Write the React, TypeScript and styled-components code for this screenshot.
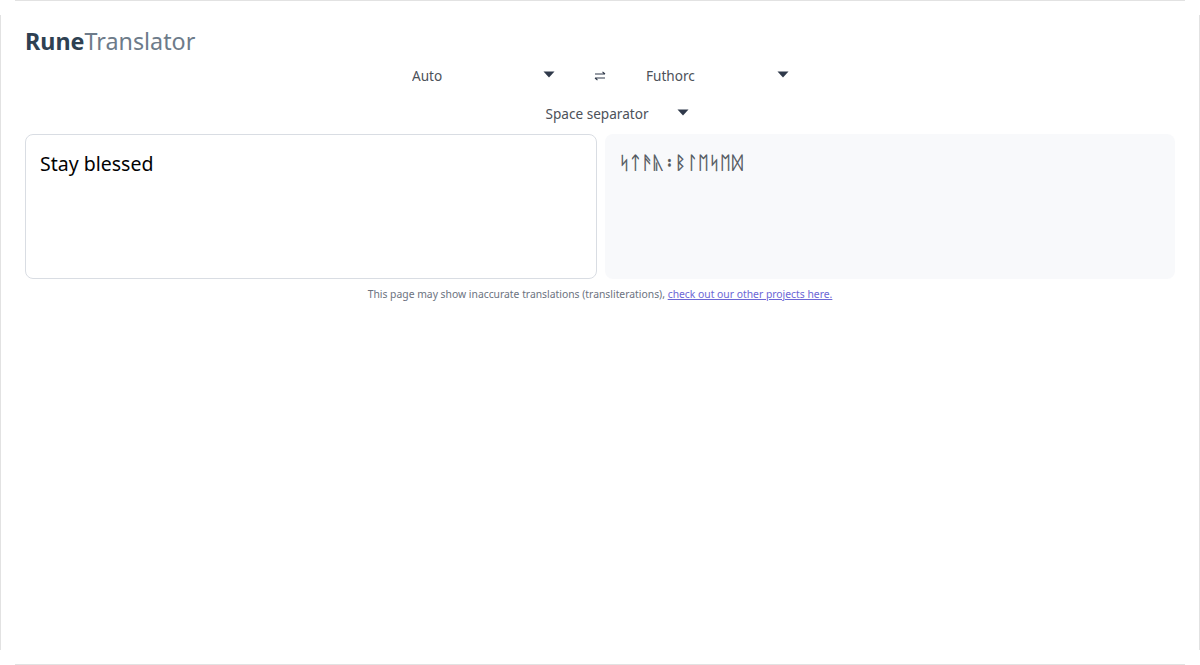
import styled, { createGlobalStyle } from "styled-components";

const GlobalStyle = createGlobalStyle`
  html, body {
    margin: 0;
    padding: 0;
    background: #fff;
    font-family: "Noto Sans", sans-serif;
  }
  * {
    box-sizing: border-box;
  }
`;

function Caret() {
  return (
    <CaretIcon viewBox="0 0 12 7" aria-hidden="true">
      <path d="M0.5 0.5h11L6 6.5z" fill="#2d3748" />
    </CaretIcon>
  );
}

function SwapIcon() {
  return (
    <SwapSvg viewBox="0 0 12 10" aria-hidden="true">
      <path
        d="M1 3h10M8.5 0.8 11 3M11 7H1M3.5 9.2 1 7"
        fill="none"
        stroke="#2d3748"
        strokeWidth="1.1"
      />
    </SwapSvg>
  );
}

export default function App() {
  return (
    <>
      <GlobalStyle />
      <Page>
        <Title>
          <b>Rune</b>
          <span>Translator</span>
        </Title>
        <LanguageRow>
          <Select>
            Auto
            <Caret />
          </Select>
          <SwapButton>
            <SwapIcon />
          </SwapButton>
          <Select>
            Futhorc
            <Caret />
          </Select>
        </LanguageRow>
        <SeparatorRow>
          <Select>
            Space separator
            <Caret />
          </Select>
        </SeparatorRow>
        <Panels>
          <Input defaultValue="Stay blessed" />
          <Output>ᛋᛏᚫᚣ᛬ᛒᛚᛖᛋᛖᛞ</Output>
        </Panels>
        <Note>
          This page may show inaccurate translations (transliterations),{" "}
          <a href="#projects">check out our other projects here.</a>
        </Note>
      </Page>
    </>
  );
}

const edge = "linear-gradient(#e2e2e2, #e2e2e2)";

const Page = styled.div`
  width: 1200px;
  height: 665px;
  padding: 25px 25px 0;
  overflow: hidden;
  background:
    ${edge} 15px 0 / 1170px 1px no-repeat,
    ${edge} 15px 664px / 1170px 1px no-repeat,
    ${edge} 0 15px / 1px 635px no-repeat,
    ${edge} 1199px 15px / 1px 635px no-repeat;
`;

const Title = styled.h1`
  margin: 0;
  height: 32px;
  font-size: 23.3px;
  line-height: 32px;
  font-weight: 400;
  color: #6c7a89;
  opacity: 0.99;
  b {
    font-weight: 700;
    color: #2c3e50;
  }
`;

const LanguageRow = styled.div`
  display: flex;
  justify-content: center;
  align-items: center;
  height: 38px;
  opacity: 0.99;
`;

const SeparatorRow = styled(LanguageRow)`
  padding-left: 33px;
`;

const Select = styled.div`
  display: flex;
  align-items: center;
  justify-content: space-between;
  width: 164px;
  padding: 0 10px 0 11px;
  font-size: 13.6px;
  line-height: 18px;
  color: #4b5058;
`;

const CaretIcon = styled.svg`
  width: 12px;
  height: 7px;
  margin-top: -3px;
`;

const SwapButton = styled.div`
  display: flex;
  justify-content: center;
  width: 70px;
`;

const SwapSvg = styled.svg`
  width: 12px;
  height: 10px;
`;

const Panels = styled.div`
  display: grid;
  grid-template-columns: 572px 570px;
  gap: 8px;
  height: 145px;
  margin-top: 1px;
`;

const Input = styled.textarea`
  display: block;
  padding: 15px 14px;
  border: 1px solid #d9dde3;
  border-radius: 8px;
  outline: none;
  resize: none;
  font-family: "Noto Sans", sans-serif;
  font-size: 19.5px;
  line-height: 28px;
  color: #000;
  opacity: 0.99;
`;

const Output = styled.div`
  padding: 15px 14px;
  border-radius: 8px;
  background: #f8f9fb;
  font-family: "DejaVu Sans", sans-serif;
  font-size: 18px;
  letter-spacing: 0.25px;
  -webkit-text-stroke: 0.45px #4f555c;
  line-height: 28px;
  color: #4f555c;
  opacity: 0.99;
`;

const Note = styled.p`
  margin: 8px 0 0;
  text-align: center;
  font-size: 10.35px;
  line-height: 15px;
  color: #6b7280;
  opacity: 0.99;
  a {
    color: #6b66d6;
  }
`;
